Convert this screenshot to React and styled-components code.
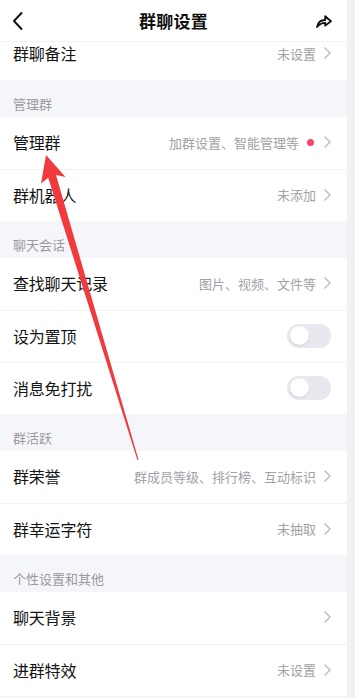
import React, { useEffect, useRef } from 'react';
import styled, { createGlobalStyle } from 'styled-components';

const GlobalStyle = createGlobalStyle`
  html, body {
    margin: 0;
    padding: 0;
    background: #f1f1f3;
  }
  body {
    font-family: "Noto Sans CJK SC", "Noto Sans", sans-serif;
  }
`;

const Screen = styled.div`
  position: relative;
  width: 347px;
  height: 698px;
  overflow-y: auto;
  background: #f5f6f9;
  scrollbar-width: none;

  &::-webkit-scrollbar {
    display: none;
  }
`;

const Content = styled.div`
  padding-bottom: 48px;
`;

const Header = styled.header`
  position: sticky;
  top: 0;
  z-index: 2;
  height: 42px;
  display: grid;
  grid-template-columns: 40px 1fr 40px;
  align-items: center;
  background: #fff;
  border-bottom: 1px solid #f2f2f2;
  box-sizing: border-box;
`;

const Title = styled.h1`
  margin: 0;
  text-align: center;
  font-size: 17px;
  font-weight: 700;
  color: #111;
  letter-spacing: 0.3px;
`;

const IconSlot = styled.div`
  display: flex;
  align-items: center;
  justify-content: ${({ $end }) => ($end ? 'flex-end' : 'flex-start')};
  padding: ${({ $end }) => ($end ? '0 14px 0 0' : '0 0 0 11px')};
`;

const SectionTitle = styled.div`
  height: 37px;
  display: flex;
  align-items: flex-end;
  padding: 0 0 4px 13px;
  box-sizing: border-box;
  font-size: 13px;
  line-height: 18px;
  color: #9a9a9e;
`;

const Group = styled.div`
  background: #fff;
`;

const Row = styled.div`
  position: relative;
  height: 52px;
  display: flex;
  align-items: center;
  padding: 0 16px 2px 13px;
  box-sizing: border-box;

  & + & {
    border-top: 1px solid #f2f2f4;
  }
`;

const Label = styled.span`
  flex: 1;
  font-size: 16px;
  color: #141414;
  letter-spacing: -0.2px;
`;

const Detail = styled.span`
  font-size: 13px;
  color: #a1a1a6;
  margin-right: 8px;
`;

const Dot = styled.span`
  width: 7px;
  height: 7px;
  border-radius: 50%;
  background: #f5456a;
  margin-right: 10px;
`;

const Switch = styled.span`
  width: 44px;
  height: 24px;
  border-radius: 12px;
  background: #e8e9ef;
  display: flex;
  align-items: center;
  padding: 0 3px;
  box-sizing: border-box;

  &::before {
    content: '';
    width: 19px;
    height: 19px;
    border-radius: 50%;
    background: #fff;
    box-shadow: 0 1px 2px rgba(0, 0, 0, 0.12);
  }
`;

const Annotation = styled.svg`
  position: absolute;
  left: 0;
  top: 0;
  pointer-events: none;
  z-index: 3;
`;

const Chevron = () => (
  <svg width="7" height="12" viewBox="0 0 7 12">
    <path d="M1 1 L6 6 L1 11" fill="none" stroke="#b8b8bc" strokeWidth="1.4" strokeLinecap="round" strokeLinejoin="round" />
  </svg>
);

const BackIcon = () => (
  <svg width="14" height="20" viewBox="0 0 14 20">
    <path d="M10.5 2 L3 10 L10.5 18" fill="none" stroke="#111" strokeWidth="2" strokeLinecap="round" strokeLinejoin="round" />
  </svg>
);

const ShareIcon = () => (
  <svg width="18" height="16" viewBox="0 0 18 16">
    <path
      d="M2 14 C2.8 9.2 6 7 10.2 7 V3.2 L16 8.2 L10.2 12.6 V9.8 C6.6 9.8 4.2 11.2 2 14 Z"
      fill="none"
      stroke="#111"
      strokeWidth="1.8"
      strokeLinejoin="round"
    />
  </svg>
);

const sections = [
  {
    title: null,
    rows: [{ label: '群聊备注', detail: '未设置', arrow: true }],
  },
  {
    title: '管理群',
    rows: [
      { label: '管理群', detail: '加群设置、智能管理等', dot: true, arrow: true },
      { label: '群机器人', detail: '未添加', arrow: true },
    ],
  },
  {
    title: '聊天会话',
    rows: [
      { label: '查找聊天记录', detail: '图片、视频、文件等', arrow: true },
      { label: '设为置顶', toggle: true },
      { label: '消息免打扰', toggle: true },
    ],
  },
  {
    title: '群活跃',
    rows: [
      { label: '群荣誉', detail: '群成员等级、排行榜、互动标识', arrow: true },
      { label: '群幸运字符', detail: '未抽取', arrow: true },
    ],
  },
  {
    title: '个性设置和其他',
    rows: [
      { label: '聊天背景', arrow: true },
      { label: '进群特效', detail: '未设置', arrow: true },
    ],
  },
];

export default function App() {
  const screenRef = useRef(null);

  useEffect(() => {
    if (screenRef.current) screenRef.current.scrollTop = 14;
  }, []);

  return (
    <>
      <GlobalStyle />
      <Screen ref={screenRef}>
        <Header>
          <IconSlot>
            <BackIcon />
          </IconSlot>
          <Title>群聊设置</Title>
          <IconSlot $end>
            <ShareIcon />
          </IconSlot>
        </Header>
        <Content>
          {sections.map((s, i) => (
            <div key={i}>
              {s.title && <SectionTitle>{s.title}</SectionTitle>}
              <Group>
                {s.rows.map((r) => (
                  <Row key={r.label}>
                    <Label>{r.label}</Label>
                    {r.detail && <Detail>{r.detail}</Detail>}
                    {r.dot && <Dot />}
                    {r.arrow && <Chevron />}
                    {r.toggle && <Switch />}
                  </Row>
                ))}
              </Group>
            </div>
          ))}
        </Content>
      </Screen>
      <Annotation width="355" height="698" viewBox="0 0 355 698">
        <polygon
          points="46,155 65.5,177 56,175 138.6,460 137.4,460 48.2,177.8 41,183.5"
          fill="#f03a3d"
          strokeLinejoin="round"
        />
      </Annotation>
    </>
  );
}
